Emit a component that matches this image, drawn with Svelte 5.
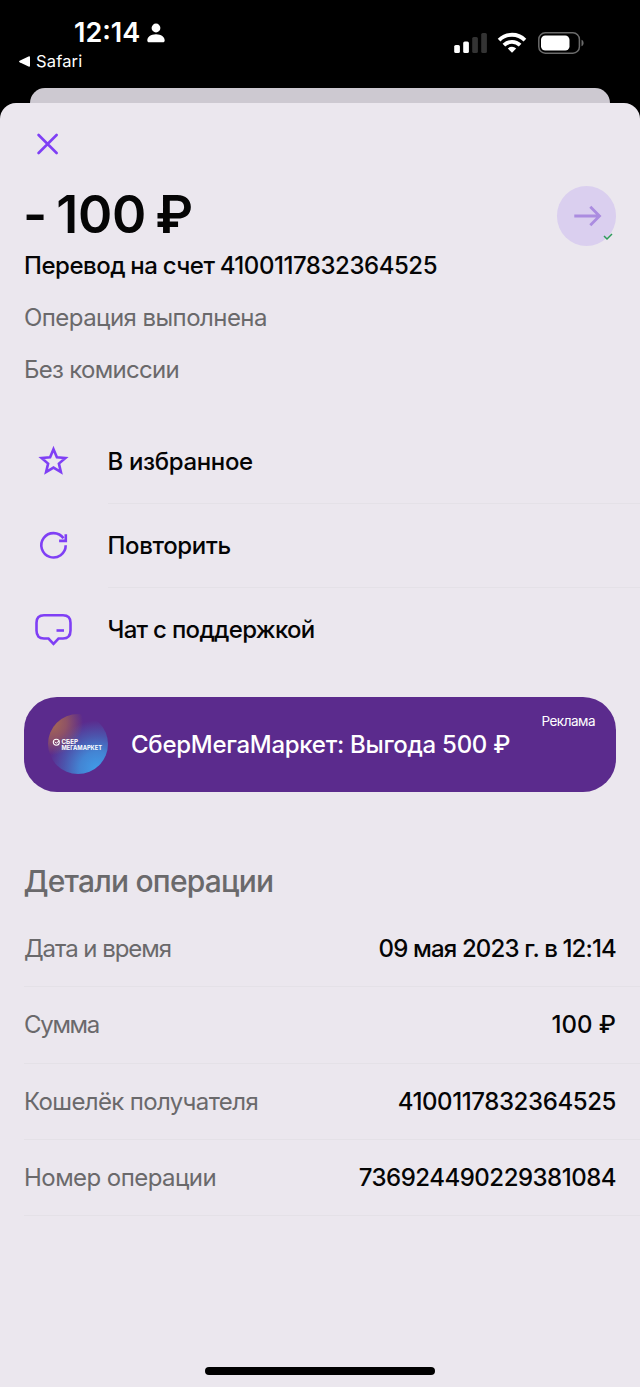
<script>
	const actions = [
		{ icon: 'star', label: 'В избранное' },
		{ icon: 'repeat', label: 'Повторить' },
		{ icon: 'chat', label: 'Чат с поддержкой' }
	];

	const details = [
		{ id: 'date', label: 'Дата и время', value: '09 мая 2023 г. в 12:14' },
		{ id: 'sum', label: 'Сумма', value: '100 ₽' },
		{ id: 'wallet', label: 'Кошелёк получателя', value: '4100117832364525' },
		{ id: 'number', label: 'Номер операции', value: '736924490229381084' }
	];
</script>

<div class="phone">
	<header class="status">
		<div class="status-left">
			<div class="clock">
				<span>12:14</span>
				<svg width="18" height="20" viewBox="0 0 18 20" fill="#fff">
					<circle cx="9" cy="5" r="4.4" />
					<path d="M0.3 17.4C0.3 14 3.8 11.2 9 11.2s8.7 2.8 8.7 6.2c0 1.2-.7 1.8-1.8 1.8H2.1C1 19.2.3 18.6.3 17.4Z" />
				</svg>
			</div>
			<div class="back">
				<svg width="11" height="11" viewBox="0 0 11 11" fill="#fff">
					<path d="M.6 4.7 9.5.5Q11 0 11 1.3V9.7Q11 11 9.5 10.5L.6 6.3Q-.5 5.5.6 4.7Z" />
				</svg>
				<span>Safari</span>
			</div>
		</div>
		<div class="status-right">
			<svg width="34" height="22" viewBox="0 0 34 22" fill="#fff">
				<rect x="0.2" y="13" width="5.7" height="8" rx="1.6" />
				<rect x="9.2" y="9.5" width="5.7" height="11.5" rx="1.6" />
				<rect x="18.2" y="5" width="5.7" height="16" rx="1.6" fill="#333" />
				<rect x="27.2" y="1" width="5.7" height="20" rx="1.6" fill="#333" />
			</svg>
			<svg class="wifi" width="30" height="22" viewBox="0 0 30 22" fill="none" stroke="#fff" stroke-width="3.8">
				<path d="M2.1 8.1a18.2 18.2 0 0 1 25.8 0" />
				<path d="M6.9 13.2a11.5 11.5 0 0 1 16.2 0" />
				<path d="M10.8 16.5a6.2 6.2 0 0 1 8.4 0L15 20.8Z" fill="#fff" stroke="none" />
			</svg>
			<svg class="battery" width="46" height="22" viewBox="0 0 46 22">
				<rect x="0.8" y="0.8" width="40.6" height="20.4" rx="6.5" fill="none" stroke="#6b6b6b" stroke-width="1.5" />
				<rect x="3" y="3.5" width="28.5" height="15" rx="4.3" fill="#fff" />
				<path d="M43.5 7.7v6.6c2.8-1.2 2.8-5.4 0-6.6Z" fill="#6b6b6b" />
			</svg>
		</div>
	</header>

	<div class="sheet-behind"></div>

	<main class="sheet">
		<button class="close" type="button" aria-label="Закрыть">
			<svg width="22" height="22" viewBox="0 0 22 22" fill="none" stroke="#7f3ff5" stroke-width="2.6" stroke-linecap="round">
				<path d="M1.6 2 19.6 20M19.6 2 1.6 20" />
			</svg>
		</button>

		<section class="summary">
			<div class="summary-text">
				<h1>- 100 ₽</h1>
				<p class="title">Перевод на счет 4100117832364525</p>
				<p class="note done">Операция выполнена</p>
				<p class="note fee">Без комиссии</p>
			</div>
			<div class="badge">
				<svg class="arrow" width="30" height="22" viewBox="0 0 30 22" fill="none" stroke="#ab8ce0" stroke-width="2.8">
					<path d="M1.3 11H27M17.3 1.8 26.5 11 17.3 20.2" />
				</svg>
				<svg class="tick" width="10" height="8" viewBox="0 0 10 8" fill="none" stroke="#2d9b5a" stroke-width="1.5">
					<path d="M1 3 4 6 9 1" />
				</svg>
			</div>
		</section>

		<ul class="actions">
			{#each actions as action (action.icon)}
				<li>
					<span class="icon">
						<svg width="40" height="40" viewBox="0 0 40 40" fill="none" stroke="#7f3ff5" stroke-width="2.6">
							{#if action.icon === 'star'}
								<path d="M19.5 7.2 22.9 15.3 31.4 16 24.9 21.6 26.9 30.1 19.5 25.6 12.1 30.1 14.1 21.6 7.6 16 16.1 15.3Z" />
							{:else if action.icon === 'repeat'}
								<path d="M31.7 19.3A12.2 12.2 0 1 1 29.5 12.3" />
								<path d="M25.1 14.9H31.8V8.3" />
							{:else}
								<path d="M10 5.3H29Q36.5 5.3 36.5 12.8V20.5Q36.5 28.5 29 28.5H24.5L19.5 33.8 14.5 28.5H10Q2.5 28.5 2.5 20.5V12.8Q2.5 5.3 10 5.3Z" />
								<path d="M22.5 20.5H30" />
							{/if}
						</svg>
					</span>
					<span class={'label ' + action.icon}>{action.label}</span>
				</li>
			{/each}
		</ul>

		<section class="promo">
			<div class="logo">
				<svg width="60" height="60" viewBox="0 0 60 60">
					<circle cx="8.3" cy="28.3" r="3" fill="none" stroke="#fff" stroke-width="1.1" />
					<path d="M6.8 27.9 8.3 29.1 11.3 26.9" fill="none" stroke="#fff" stroke-width="1" />
					<text x="13.5" y="30.2" textLength="16.5" lengthAdjust="spacingAndGlyphs">СБЕР</text>
					<text x="13.5" y="35.7" textLength="40.5" lengthAdjust="spacingAndGlyphs">МЕГАМАРКЕТ</text>
				</svg>
			</div>
			<p>СберМегаМаркет: Выгода 500 ₽</p>
			<small>Реклама</small>
		</section>

		<section class="details">
			<h2>Детали операции</h2>
			<dl>
				{#each details as row (row.id)}
					<div class={'row ' + row.id}>
						<dt>{row.label}</dt>
						<dd>{row.value}</dd>
					</div>
				{/each}
			</dl>
		</section>

		<div class="home-bar"></div>
	</main>
</div>

<style>
	:global(body) {
		background: #000;
	}

	.phone {
		display: flex;
		flex-direction: column;
		box-sizing: border-box;
		width: 640px;
		height: 1387px;
		overflow: hidden;
		background: #000;
		color: #050505;
		font-family: Inter, 'Liberation Sans', sans-serif;
		font-size: 24px;
	}

	h1,
	h2,
	p,
	ul,
	dl,
	dd {
		margin: 0;
		padding: 0;
	}

	/* Status bar */
	.status {
		display: flex;
		justify-content: space-between;
		height: 88px;
		color: #fff;
	}

	.status-left {
		padding: 17px 0 0 19px;
	}

	.clock {
		display: flex;
		align-items: center;
		gap: 7px;
		padding-left: 55px;
		font-size: 27px;
		font-weight: 600;
		line-height: 31px;
	}

	.back {
		display: flex;
		align-items: center;
		gap: 6px;
		margin-top: 3px;
		font-size: 16.5px;
		line-height: 20px;
		letter-spacing: 0.15px;
	}

	.status-right {
		display: flex;
		align-items: flex-start;
		padding: 32px 56px 0 0;
	}

	.wifi {
		margin: -0.5px 0 0 9px;
	}

	.battery {
		margin-left: 11px;
	}

	/* Sheets */
	.sheet-behind {
		flex: none;
		height: 15px;
		margin: 0 30px;
		border-radius: 15px 15px 0 0;
		background: #cdc9d1;
	}

	.sheet {
		flex: 1;
		display: flex;
		flex-direction: column;
		border-radius: 16px 16px 0 0;
		background: #ebe7ee;
	}

	.close {
		display: flex;
		align-self: flex-start;
		margin: 30px 0 0 37px;
		padding: 0;
		border: none;
		background: none;
	}

	.summary {
		display: flex;
		justify-content: space-between;
		padding: 31px 24px 0;
	}

	h1 {
		margin: -1px 0 0 -1px;
		font-size: 52px;
		font-weight: 600;
		line-height: 60px;
		letter-spacing: -0.3px;
		word-spacing: -3.5px;
		white-space: nowrap;
	}

	.title {
		margin-top: 5px;
		font-weight: 500;
		line-height: 32px;
		letter-spacing: -0.46px;
		word-spacing: -0.8px;
		white-space: nowrap;
	}

	.note {
		margin-top: 20px;
		color: #6a696b;
		line-height: 32px;
		letter-spacing: -0.55px;
	}

	.fee {
		letter-spacing: -0.7px;
	}

	.badge {
		position: relative;
		display: flex;
		align-items: center;
		justify-content: center;
		width: 59.5px;
		height: 59.5px;
		border-radius: 50%;
		background: #dacfef;
	}

	.arrow {
		margin-left: 4px;
	}

	.tick {
		position: absolute;
		right: 3px;
		bottom: 5px;
	}

	/* Actions */
	.actions {
		margin-top: 34px;
		list-style: none;
	}

	.actions li {
		display: flex;
		align-items: center;
		height: 84px;
		padding-left: 34px;
	}

	.icon {
		display: flex;
		width: 73.5px;
	}

	.label {
		flex: 1;
		display: flex;
		align-items: center;
		height: 83px;
		border-bottom: 1px solid #e4e1e7;
		font-weight: 500;
		letter-spacing: -0.35px;
	}

	.label.chat {
		letter-spacing: -0.7px;
	}

	.actions li:last-child .label {
		border-color: transparent;
	}

	/* Promo banner */
	.promo {
		position: relative;
		display: flex;
		align-items: center;
		height: 94.5px;
		margin: 25px 24px 0;
		padding-left: 23.5px;
		box-sizing: border-box;
		border-radius: 33px;
		background: #5b2b8d;
		color: #fff;
	}

	.logo {
		width: 60px;
		height: 60px;
		margin-right: 23.5px;
		border-radius: 50%;
		background:
			radial-gradient(circle at 5% 15%, #a96a52 0%, rgba(160, 96, 88, 0.75) 20%, rgba(91, 43, 141, 0) 42%),
			radial-gradient(circle at 82% 92%, #419ce8 0%, #4384d3 24%, #4c55ad 45%, #5b2b8d 66%);
	}

	.logo svg {
		display: block;
	}

	.logo text {
		fill: #fff;
		font-size: 5.8px;
		font-weight: 700;
	}

	.promo p {
		font-weight: 500;
		letter-spacing: -0.28px;
		white-space: nowrap;
	}

	.promo small {
		position: absolute;
		top: 15px;
		right: 21px;
		font-size: 13.5px;
		line-height: 18px;
		letter-spacing: -0.5px;
	}

	/* Details */
	.details h2 {
		margin: 71.5px 0 0 23.5px;
		color: #6a696b;
		font-size: 30px;
		font-weight: 500;
		line-height: 36px;
		letter-spacing: -0.8px;
	}

	.details dl {
		margin: 12px 0 0 24px;
	}

	.row {
		display: flex;
		align-items: center;
		justify-content: space-between;
		box-sizing: border-box;
		height: 76.3px;
		padding-right: 24px;
		border-bottom: 1px solid #e4e1e7;
	}

	dt {
		color: #6a696b;
		letter-spacing: -0.55px;
	}

	dd {
		font-weight: 500;
		letter-spacing: -0.5px;
	}

	.date dt {
		letter-spacing: -1.05px;
	}

	.date dd {
		letter-spacing: -0.85px;
	}

	.sum dt {
		letter-spacing: -1.3px;
	}

	.sum dd {
		letter-spacing: 0;
	}

	.wallet dt {
		letter-spacing: -0.63px;
	}

	.wallet dd {
		letter-spacing: -0.4px;
	}

	.home-bar {
		align-self: center;
		width: 230px;
		height: 8px;
		margin: auto 0 12px;
		border-radius: 4px;
		background: #000;
	}
</style>
